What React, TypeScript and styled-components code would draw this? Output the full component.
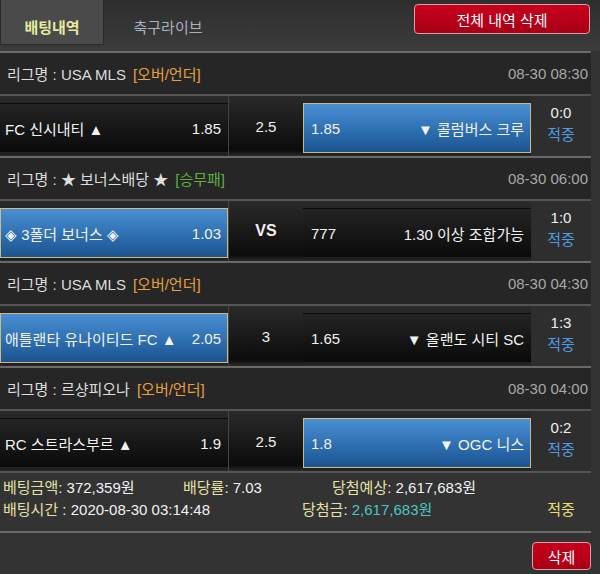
import React from 'react'
import styled, { createGlobalStyle } from 'styled-components';

const Global = createGlobalStyle`
  html, body {
    margin: 0;
    padding: 0;
    background: #333;
  }
  body {
    font-family: "Liberation Sans", "Noto Sans CJK KR", sans-serif;
  }
`;

const Page = styled.div`
  width: 600px;
  height: 574px;
  overflow: hidden;
  background: #333;
  color: #eee;
  font-size: 15px;
`;

const Header = styled.div`
  height: 51px;
  display: flex;
  align-items: flex-start;
  background: linear-gradient(#2e2e2e, #3c3c3c);
  padding-right: 10px;
`;

const Tab = styled.div<{ active?: boolean }>`
  height: 45px;
  width: 104px;
  display: flex;
  align-items: center;
  justify-content: center;
  font-size: 15px;
  font-weight: ${p => (p.active ? 'bold' : 'normal')};
  color: ${p => (p.active ? '#e8eaa0' : '#a9b1c0')};
  background: ${p => (p.active ? '#4a4a4a' : 'transparent')};
  border: 1px solid ${p => (p.active ? '#2a2a2a' : 'transparent')};
  border-top: none;
  box-sizing: border-box;
  padding-top: 8px;
  & + & {
    margin-left: 12px;
  }
`;

const RedButton = styled.button<{ wide?: boolean }>`
  margin-left: auto;
  height: ${p => (p.wide ? '30px' : '28px')};
  width: ${p => (p.wide ? '176px' : '59px')};
  margin-top: ${p => (p.wide ? '4px' : '0')};
  border: 1px solid #d8a0a8;
  border-radius: 4px;
  background: linear-gradient(#c8001c, #a80016);
  color: #fff;
  font-family: inherit;
  font-size: 15px;
  padding: 0;
  cursor: pointer;
`;

const List = styled.div`
  width: 591px;
`;

const LeagueRow = styled.div`
  height: 41px;
  border-top: 2px solid #6a6a6a;
  background: #262626;
  display: flex;
  align-items: center;
  padding: 0 3px 0 7px;
  color: #ddd;
`;

const Tag = styled.span<{ color: string }>`
  color: ${p => p.color};
  margin-left: 7px;
`;

const Date = styled.span`
  margin-left: auto;
  color: #a8a8a8;
`;

const MatchRow = styled.div`
  height: 60px;
  border-top: 2px solid #555;
  display: grid;
  grid-template-columns: 228px 75px 228px 60px;
  background: linear-gradient(#2a2a2a, #0c0c0c 90%, #2a2a2a);
`;

const Pick = styled.div<{ selected?: boolean; side: 'home' | 'away' }>`
  margin: 7px 0 3px;
  display: flex;
  align-items: center;
  justify-content: space-between;
  padding: ${p => (p.side === 'home' ? '0 6px 0 4px' : '0 6px 0 7px')};
  box-sizing: border-box;
  border: 1px solid ${p => (p.selected ? '#cdbb80' : 'transparent')};
  background: ${p =>
    p.selected
      ? 'linear-gradient(#4a8fd4, #2e6fb0 55%, #1c5390)'
      : 'linear-gradient(#242424, #0a0a0a)'};
  color: #f2f2f2;
  white-space: nowrap;
`;

const Line = styled.div<{ bold?: boolean }>`
  display: flex;
  align-items: center;
  justify-content: center;
  border-left: 1px solid #444;
  font-weight: ${p => (p.bold ? 'bold' : 'normal')};
  font-size: ${p => (p.bold ? '16px' : '15px')};
  color: #f0f0f0;
`;

const Score = styled.div`
  background: #2e2e2e;
  display: flex;
  flex-direction: column;
  align-items: center;
  justify-content: center;
  gap: 3px;
  line-height: 19px;
  padding-bottom: 6px;
`;

const Hit = styled.span<{ color?: string }>`
  color: ${p => p.color || '#4f9de0'};
`;

const Summary = styled.div`
  border-top: 2px solid #555;
  padding: 5px 0 12px 3px;
  width: 591px;
  box-sizing: border-box;
  display: flex;
  flex-direction: column;
  gap: 3px;
  line-height: 19px;
`;

const SumLine = styled.div`
  display: flex;
  align-items: center;
`;

const Item = styled.span<{ w?: number; center?: boolean }>`
  width: ${p => (p.w ? p.w + 'px' : 'auto')};
  flex: ${p => (p.w ? 'none' : '1')};
  text-align: ${p => (p.center ? 'center' : 'left')};
  white-space: nowrap;
`;

const Label = styled.span`
  color: #e6e0a4;
`;

const Value = styled.span<{ teal?: boolean }>`
  color: ${p => (p.teal ? '#4cc6c0' : '#f2f2f2')};
`;

const Bottom = styled.div`
  border-top: 2px solid #6a6a6a;
  width: 591px;
  box-sizing: border-box;
  display: flex;
  padding-top: 9px;
`;

type Bet = {
  league: string;
  tag: string;
  tagColor: string;
  date: string;
  home: string;
  homeOdds: string;
  line: string;
  away: string;
  awayOdds: string;
  pick: 'home' | 'away';
  score: string;
};

const bets: Bet[] = [
  { league: 'USA MLS', tag: '[오버/언더]', tagColor: '#e8a040', date: '08-30 08:30', home: 'FC 신시내티 ▲', homeOdds: '1.85', line: '2.5', away: '▼ 콜럼버스 크루', awayOdds: '1.85', pick: 'away', score: '0:0' },
  { league: '★ 보너스배당 ★', tag: '[승무패]', tagColor: '#5cb043', date: '08-30 06:00', home: '◈ 3폴더 보너스 ◈', homeOdds: '1.03', line: 'VS', away: '1.30 이상 조합가능', awayOdds: '777', pick: 'home', score: '1:0' },
  { league: 'USA MLS', tag: '[오버/언더]', tagColor: '#e8a040', date: '08-30 04:30', home: '애틀랜타 유나이티드 FC ▲', homeOdds: '2.05', line: '3', away: '▼ 올랜도 시티 SC', awayOdds: '1.65', pick: 'home', score: '1:3' },
  { league: '르샹피오나', tag: '[오버/언더]', tagColor: '#e8a040', date: '08-30 04:00', home: 'RC 스트라스부르 ▲', homeOdds: '1.9', line: '2.5', away: '▼ OGC 니스', awayOdds: '1.8', pick: 'away', score: '0:2' },
];

export default function App() {
  return (
    <Page>
      <Global />
      <Header>
        <Tab active>배팅내역</Tab>
        <Tab>축구라이브</Tab>
        <RedButton wide>전체 내역 삭제</RedButton>
      </Header>
      <List>
        {bets.map((b, i) => (
          <React.Fragment key={i}>
            <LeagueRow>
              리그명 : {b.league}
              <Tag color={b.tagColor}>{b.tag}</Tag>
              <Date>{b.date}</Date>
            </LeagueRow>
            <MatchRow>
              <Pick side="home" selected={b.pick === 'home'}>
                <span>{b.home}</span>
                <span>{b.homeOdds}</span>
              </Pick>
              <Line bold={b.line === 'VS'}>{b.line}</Line>
              <Pick side="away" selected={b.pick === 'away'}>
                <span>{b.awayOdds}</span>
                <span>{b.away}</span>
              </Pick>
              <Score>
                <span>{b.score}</span>
                <Hit>적중</Hit>
              </Score>
            </MatchRow>
          </React.Fragment>
        ))}
      </List>
      <Summary>
        <SumLine>
          <Item w={180}><Label>베팅금액</Label><Value>: 372,359원</Value></Item>
          <Item w={149}><Label>배당률</Label><Value>: 7.03</Value></Item>
          <Item><Label>당첨예상</Label><Value>: 2,617,683원</Value></Item>
        </SumLine>
        <SumLine>
          <Item w={299}><Label>배팅시간</Label><Value> : 2020-08-30 03:14:48</Value></Item>
          <Item><Label>당첨금</Label><Value>: </Value><Value teal>2,617,683원</Value></Item>
          <Item w={60} center><Hit color="#e8e070">적중</Hit></Item>
        </SumLine>
      </Summary>
      <Bottom>
        <RedButton>삭제</RedButton>
      </Bottom>
    </Page>
  );
}
